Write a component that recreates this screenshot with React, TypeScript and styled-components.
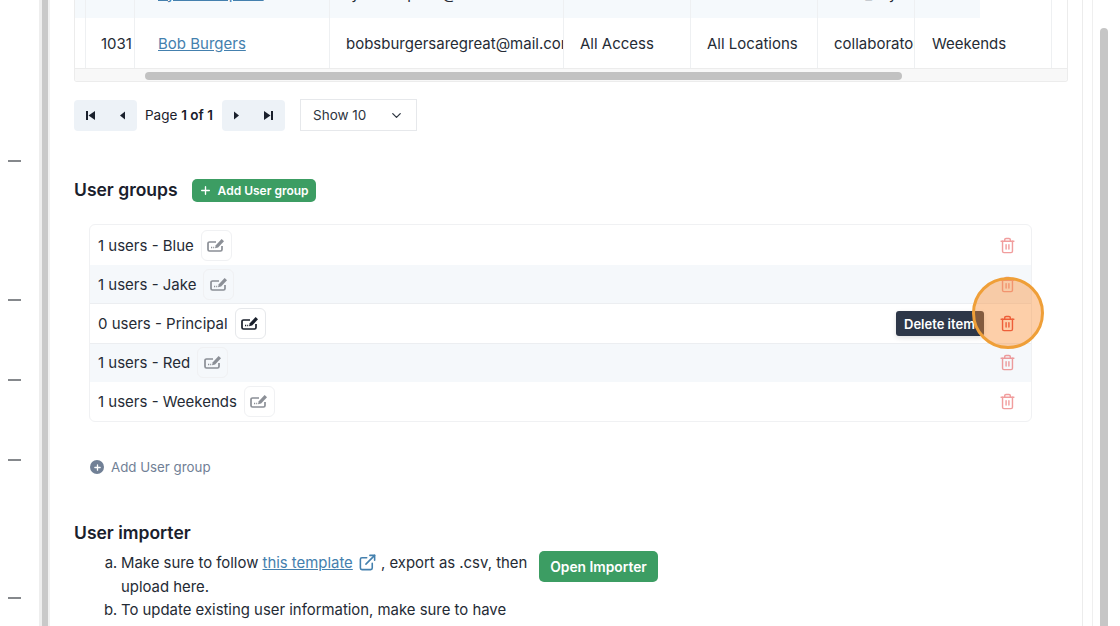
import React from 'react';
import styled, { createGlobalStyle } from 'styled-components';
import { ChevronDown, ExternalLink, Plus, Trash2 } from 'lucide-react';

const GlobalStyle = createGlobalStyle`
  html, body {
    margin: 0;
    padding: 0;
    background: #fff;
  }

  body {
    font-family: 'Inter', 'Liberation Sans', sans-serif;
    color: #1a202c;
  }
`;

const Page = styled.div`
  display: flex;
  width: 1120px;
  height: 626px;
  overflow: hidden;
  background: #fff;
`;

const Gutter = styled.div`
  width: 39px;
  flex: none;
  padding: 160px 0 0 8px;
  box-sizing: border-box;
`;

const Dash = styled.div<{ $gap: number }>`
  width: 13px;
  height: 2px;
  margin-top: ${({ $gap }) => $gap}px;
  background: #85888c;
`;

const Rail = styled.div`
  width: 6px;
  flex: none;
  border-left: 3px solid #eeeeee;
  border-right: 2px solid #f1f1f1;
  background: #c9c9c9;
`;

const Content = styled.main`
  width: 1033px;
  flex: none;
  box-sizing: border-box;
  padding: 0 14px 0 24px;
  border-right: 1px solid #ececec;
`;

const RightRail = styled.div`
  flex: none;
  width: 9px;
  border-right: 1px solid #efefef;
`;

const ScrollTrack = styled.div`
  flex: none;
  padding: 28px 0 0 7px;
`;

const ScrollThumb = styled.div`
  width: 8px;
  height: 620px;
  border-radius: 4px 4px 0 0;
  background: #c6c6c6;
`;

const TableWrap = styled.div`
  margin-top: -32px;
  height: 114px;
  overflow: hidden;
  border-left: 1px solid #ececec;
  border-right: 1px solid #ececec;
  border-bottom: 1px solid #ececec;
  border-radius: 0 0 3px 3px;
  box-sizing: border-box;
`;

const Row = styled.div<{ $striped?: boolean }>`
  display: grid;
  grid-template-columns: 11px 49px 195px 234px 127px 127px 97px 137px;
  height: 50px;
  width: ${({ $striped }) => ($striped ? '905px' : '992px')};
  background: ${({ $striped }) => ($striped ? '#f5f9fc' : '#fff')};
`;

const Cell = styled.div<{ $indent?: number }>`
  display: flex;
  align-items: center;
  box-sizing: border-box;
  padding-left: ${({ $indent }) => $indent ?? 16}px;
  border-right: 1px solid #eef0f2;
  overflow: hidden;
  white-space: nowrap;
  font-size: 15px;
  color: #252b35;
`;

const NameLink = styled.a`
  color: #4480ae;
  text-decoration: underline;
`;

const ScrollBar = styled.div`
  height: 14px;
  padding: 3px 165px 3px 70px;
  box-sizing: border-box;
  border-top: 1px solid #ececec;
  background: #f8f8f8;
`;

const ScrollBarThumb = styled.div`
  height: 8px;
  border-radius: 4px;
  background: #c2c2c2;
`;

const Pager = styled.div`
  display: flex;
  align-items: center;
  margin-top: 17px;
`;

const PagerButtons = styled.div`
  display: flex;
  align-items: center;
  justify-content: space-between;
  width: 63px;
  height: 31px;
  padding: 0 11px;
  box-sizing: border-box;
  border-radius: 4px;
  background: #edf2f7;
`;

const PageLabel = styled.span`
  margin: 0 8px;
  width: 69px;
  font-size: 13.5px;
  white-space: nowrap;

  b {
    font-weight: 600;
  }
`;

const ShowSelect = styled.div`
  display: flex;
  align-items: center;
  justify-content: space-between;
  width: 117px;
  height: 32px;
  margin-left: 15px;
  padding: 0 12px;
  box-sizing: border-box;
  border: 1px solid #e6e8eb;
  font-size: 13.5px;
  color: #2d3540;
`;

const SectionHead = styled.div`
  display: flex;
  align-items: center;
  gap: 14px;
  margin-top: 47px;
`;

const Title = styled.h2`
  margin: 0;
  font-size: 17.5px;
  line-height: 24px;
  font-weight: 600;
  color: #1a202c;
`;

const GreenButton = styled.button<{ $small?: boolean }>`
  display: flex;
  align-items: center;
  justify-content: center;
  gap: 6px;
  height: ${({ $small }) => ($small ? 23 : 31)}px;
  width: ${({ $small }) => ($small ? 124 : 119)}px;
  padding: 0;
  border: 0;
  border-radius: 5px;
  background: #3c9d63;
  color: #fff;
  font-family: inherit;
  font-size: ${({ $small }) => ($small ? 12 : 13.8)}px;
  font-weight: 600;
  flex: none;
`;

const GroupList = styled.div`
  margin: 22px 36px 0 15px;
  padding-top: 1px;
  border: 1px solid #f0f1f3;
  border-radius: 6px;
`;

const GroupRow = styled.div<{ $striped?: boolean; $active?: boolean }>`
  position: relative;
  z-index: ${({ $active }) => ($active ? 1 : 'auto')};
  display: flex;
  align-items: center;
  justify-content: space-between;
  height: 39px;
  padding: 0 15px 0 8px;
  background: ${({ $striped }) => ($striped ? '#f5f8fb' : 'transparent')};
  border-top: ${({ $active }) => ($active ? '1px solid #eceef1' : '0')};
  border-bottom: ${({ $active }) => ($active ? '1px solid #eceef1' : '0')};
  margin: ${({ $active }) => ($active ? '-1px 0' : '0')};
`;

const GroupName = styled.div`
  display: flex;
  align-items: center;
  gap: 7px;
  font-size: 15px;
  color: #252b35;
`;

const EditButton = styled.span<{ $active?: boolean }>`
  display: flex;
  align-items: center;
  justify-content: center;
  width: 31px;
  height: 31px;
  box-sizing: border-box;
  border: 1px solid ${({ $active }) => ($active ? '#e6e8eb' : '#f0f1f3')};
  border-radius: 6px;
  background: ${({ $active }) => ($active ? '#fff' : 'transparent')};
  color: ${({ $active }) => ($active ? '#1a202c' : '#8b8f96')};
`;

const TrashIcon = styled(Trash2)<{ $active?: boolean }>`
  width: 17px;
  height: 17px;
  color: #e53e3e;
  opacity: ${({ $active }) => ($active ? 1 : 0.5)};
`;

const Tooltip = styled.div`
  position: absolute;
  top: 7px;
  right: 47px;
  display: flex;
  align-items: center;
  height: 25px;
  width: 88px;
  padding-left: 8px;
  box-sizing: border-box;
  border-radius: 3px;
  background: #2d3748;
  color: #fff;
  font-size: 13px;
  font-weight: 600;
  box-shadow: 0 2px 5px rgba(0, 0, 0, 0.12);
`;

const Highlight = styled.div`
  position: absolute;
  top: -27px;
  right: -13px;
  width: 72px;
  height: 72px;
  box-sizing: border-box;
  border: 3px solid #ef9f38;
  border-radius: 50%;
  background: rgba(250, 140, 50, 0.42);
`;

const AddGroup = styled.div`
  display: flex;
  align-items: center;
  gap: 7px;
  margin: 37px 0 0 16px;
  font-size: 13.3px;
  color: #718096;
`;

const AddDot = styled.span`
  display: flex;
  align-items: center;
  justify-content: center;
  width: 14px;
  height: 14px;
  border-radius: 50%;
  background: #718096;
  color: #fff;
`;

const ImporterTitle = styled(Title)`
  margin-top: 46px;
`;

const ImporterBody = styled.div`
  display: flex;
  align-items: flex-start;
  gap: 8px;
`;

const Steps = styled.ol`
  list-style: lower-alpha;
  width: 457px;
  margin: 7px 0 0;
  padding: 0 0 0 47px;
  box-sizing: border-box;
  font-size: 14.9px;
  line-height: 23.5px;
  color: #252b35;
`;

const TemplateLink = styled.a`
  color: #4480ae;
  text-decoration: underline;
`;

const LinkIcon = styled(ExternalLink)`
  width: 19px;
  height: 19px;
  margin-left: 5px;
  vertical-align: -4px;
  color: #4480ae;
`;

const ImporterButton = styled(GreenButton)`
  margin-top: 6px;
`;

const SkipIcon = ({ flip }: { flip?: boolean }) => (
  <svg width="11" height="11" viewBox="0 0 11 11" style={flip ? { transform: 'scaleX(-1)' } : undefined}>
    <rect x="1" y="1" width="2" height="9" fill="#1a202c" />
    <path d="M10 1v9L3.5 5.5z" fill="#1a202c" />
  </svg>
);

const StepIcon = ({ flip }: { flip?: boolean }) => (
  <svg width="7" height="11" viewBox="0 0 7 11" style={flip ? { transform: 'scaleX(-1)' } : undefined}>
    <path d="M6 1.5v8L1 5.5z" fill="#1a202c" />
  </svg>
);

const SignIcon = () => (
  <svg width="18" height="15" viewBox="0 0 18 15" fill="none" stroke="currentColor" strokeWidth="1.7">
    <path d="M9 4H2.5a1.5 1.5 0 0 0-1.5 1.5v6A1.5 1.5 0 0 0 2.5 13h11a1.5 1.5 0 0 0 1.5-1.5V8" />
    <path d="M8 10.2l.8-3L14.6 1 17 3.3l-5.9 6.2z" fill="currentColor" stroke="none" />
    <path d="M4 9.5h1.2M6.2 9.5h1" strokeWidth="1.3" />
  </svg>
);

const groups = [
  { name: '1 users - Blue' },
  { name: '1 users - Jake', striped: true },
  { name: '0 users - Principal', active: true },
  { name: '1 users - Red', striped: true },
  { name: '1 users - Weekends' },
];

const App = () => {
  return (
    <Page>
      <GlobalStyle />

      <Gutter>
        <Dash $gap={0} />
        <Dash $gap={137} />
        <Dash $gap={78} />
        <Dash $gap={78} />
        <Dash $gap={136} />
      </Gutter>
      <Rail />

      <Content>
        <TableWrap>
          <Row $striped>
            <Cell $indent={0} />
            <Cell $indent={15}>1030</Cell>
            <Cell $indent={23}><NameLink>Tyler Sampson</NameLink></Cell>
            <Cell>tylersampson@mail.com</Cell>
            <Cell>All Access</Cell>
            <Cell>All Locations</Cell>
            <Cell>user_key</Cell>
            <Cell $indent={0} />
          </Row>
          <Row>
            <Cell $indent={0} />
            <Cell $indent={15}>1031</Cell>
            <Cell $indent={23}><NameLink>Bob Burgers</NameLink></Cell>
            <Cell>bobsburgersaregreat@mail.com</Cell>
            <Cell>All Access</Cell>
            <Cell>All Locations</Cell>
            <Cell>collaborator</Cell>
            <Cell $indent={17}>Weekends</Cell>
          </Row>
          <ScrollBar>
            <ScrollBarThumb />
          </ScrollBar>
        </TableWrap>

        <Pager>
          <PagerButtons>
            <SkipIcon />
            <StepIcon />
          </PagerButtons>
          <PageLabel>Page <b>1 of 1</b></PageLabel>
          <PagerButtons>
            <StepIcon flip />
            <SkipIcon flip />
          </PagerButtons>
          <ShowSelect>
            Show 10
            <ChevronDown size={15} />
          </ShowSelect>
        </Pager>

        <SectionHead>
          <Title>User groups</Title>
          <GreenButton $small>
            <Plus size={13} strokeWidth={2.5} />
            Add User group
          </GreenButton>
        </SectionHead>

        <GroupList>
          {groups.map(({ name, striped, active }) => (
            <GroupRow key={name} $striped={striped} $active={active}>
              <GroupName>
                {name}
                <EditButton $active={active}>
                  <SignIcon />
                </EditButton>
              </GroupName>
              <TrashIcon $active={active} />
              {active && <Tooltip>Delete item</Tooltip>}
              {active && <Highlight />}
            </GroupRow>
          ))}
        </GroupList>

        <AddGroup>
          <AddDot>
            <Plus size={9} strokeWidth={3.5} />
          </AddDot>
          Add User group
        </AddGroup>

        <ImporterTitle>User importer</ImporterTitle>
        <ImporterBody>
          <Steps>
            <li>
              Make sure to follow <TemplateLink>this template</TemplateLink>
              <LinkIcon /> , export as .csv, then upload here.
            </li>
            <li>To update existing user information, make sure to have</li>
          </Steps>
          <ImporterButton>Open Importer</ImporterButton>
        </ImporterBody>
      </Content>

      <RightRail />
      <ScrollTrack>
        <ScrollThumb />
      </ScrollTrack>
    </Page>
  );
};

export default App;
